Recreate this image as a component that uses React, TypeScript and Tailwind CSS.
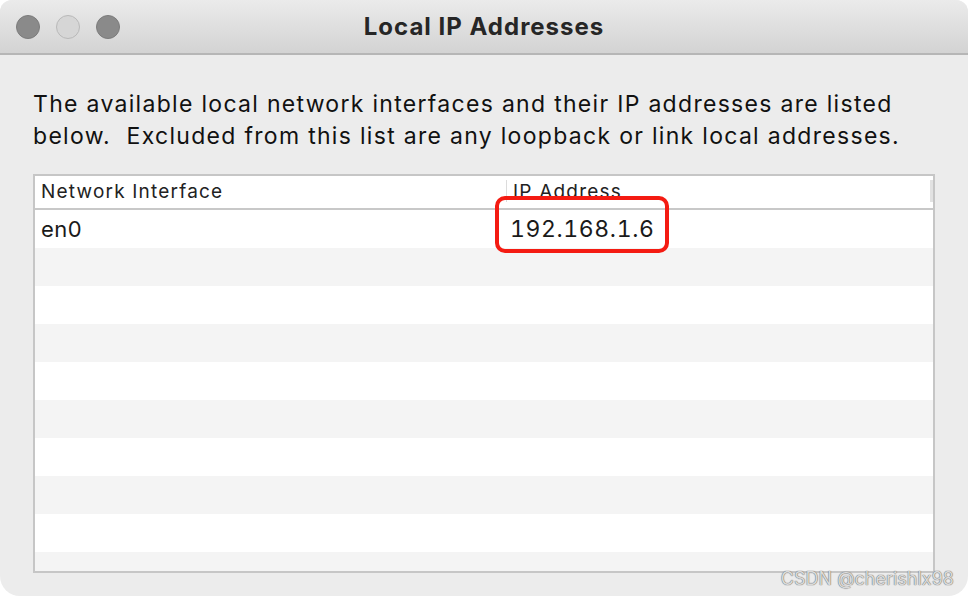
const font = { fontFamily: "Inter, 'Liberation Sans', sans-serif" };

const rows = [
  { name: "en0", ip: "192.168.1.6" },
  ...Array.from({ length: 9 }, () => ({ name: "", ip: "" })),
];

function TrafficLights() {
  return (
    <div className="flex items-center gap-[16px] pl-[16px]">
      <span className="w-[24px] h-[24px] rounded-full bg-[#8a8a8a] border border-[#7c7c7c]" />
      <span className="w-[24px] h-[24px] rounded-full bg-[#d6d6d6] border border-[#b9b9b9]" />
      <span className="w-[24px] h-[24px] rounded-full bg-[#8a8a8a] border border-[#7c7c7c]" />
    </div>
  );
}

export default function App() {
  return (
    <div className="w-[968px] h-[596px] bg-white" style={font}>
      <div className="relative w-full h-full bg-[#ececec] rounded-t-[12px] rounded-b-[20px] overflow-hidden flex flex-col">
        <div className="relative h-[55px] shrink-0 bg-gradient-to-b from-[#ebebeb] to-[#d3d3d3] border-b-2 border-[#b6b6b6] flex items-center">
          <TrafficLights />
          <div className="absolute inset-0 flex items-center justify-center text-[24px] font-bold text-[#262626] tracking-[1px]">
            Local IP Addresses
          </div>
        </div>

        <div className="px-[33px] pt-[33px] text-[23px] leading-[32px] text-[#111] tracking-[1.3px] whitespace-nowrap">
          The available local network interfaces and their IP addresses are listed
          <br />
          below.&nbsp;&nbsp;Excluded from this list are any loopback or link local addresses.
        </div>

        <div className="relative mx-[33px] mt-[22px] w-[902px] h-[399px] border-2 border-[#c6c6c6] bg-white flex flex-col">
          <div className="h-[34px] shrink-0 flex items-center border-b-2 border-[#c8c8c8] text-[19px] text-[#222] tracking-[1.2px]">
            <div className="w-[471px] pl-[6px]">Network Interface</div>
            <div className="flex-1 flex items-center h-full">
              <span className="w-[1px] h-[22px] bg-[#dcdcdc] mr-[6px] self-start mt-[4px]" />
              IP Address
            </div>
            <span className="w-[3px] h-[22px] bg-[#e2e2e2] self-start mt-[4px]" />
          </div>
          <div className="flex-1 overflow-hidden">
            {rows.map((r, i) => (
              <div
                key={i}
                className={`h-[38px] flex items-center text-[22px] text-[#1a1a1a] ${
                  i % 2 === 0 ? "bg-white" : "bg-[#f4f4f4]"
                }`}
              >
                <div className="w-[471px] pl-[6px] tracking-[0.5px]">{r.name}</div>
                <div className="flex-1 pl-[4px] text-[23px] tabular-nums tracking-[0.6px]">{r.ip}</div>
              </div>
            ))}
          </div>
          <div className="absolute left-[460px] top-[20px] w-[174px] h-[57px] border-[4px] border-[#f41b12] rounded-[10px]" />
        </div>

        <div
          className="absolute right-[14px] bottom-[4px] text-[18px] text-[#dadada]"
          style={{ textShadow: "0 0 1px #666, 0 0 1px #777" }}
        >
          CSDN @cherishlx98
        </div>
      </div>
    </div>
  );
}
